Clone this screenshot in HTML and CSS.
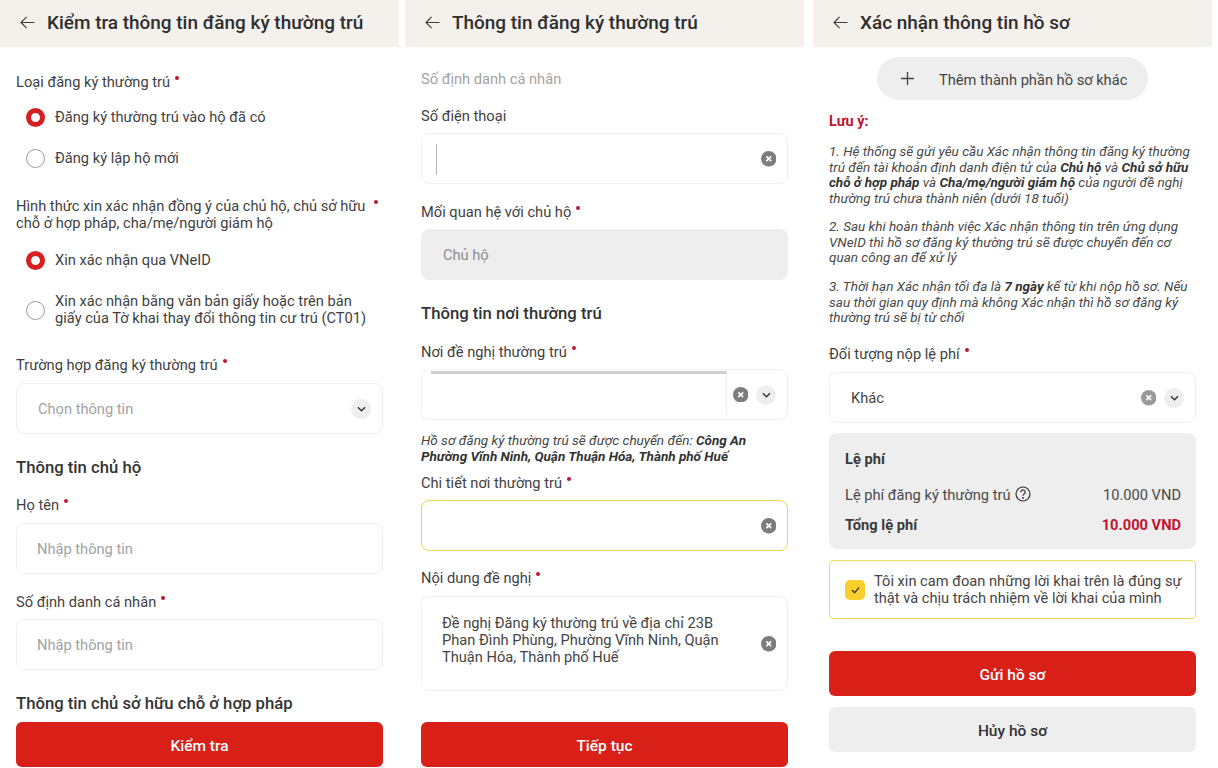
FILE: index.html
```html
<!DOCTYPE html>
<html lang="vi">
<head>
<meta charset="utf-8">
<title>Đăng ký thường trú</title>
<link rel="stylesheet" href="styles.css">
</head>
<body>
<main class="screens">
  <section class="panel panel-check">
    <header class="bar">
      <svg class="back" viewBox="0 0 16 14"><path d="M15.5 7H1M7 1 1 7l6 6"/></svg>
      <h1>Kiểm tra thông tin đăng ký thường trú</h1>
    </header>
    <div class="content">
      <p class="label l1a">Loại đăng ký thường trú<i class="dot"></i></p>
      <div class="radio r1a"><span class="mark on"></span><span>Đăng ký thường trú vào hộ đã có</span></div>
      <div class="radio r1b"><span class="mark"></span><span>Đăng ký lập hộ mới</span></div>
      <p class="label l1b">Hình thức xin xác nhận đồng ý của chủ hộ, chủ sở hữu<i class="dot wide"></i><br>chỗ ở hợp pháp, cha/mẹ/người giám hộ</p>
      <div class="radio r1c"><span class="mark on"></span><span>Xin xác nhận qua VNeID</span></div>
      <div class="radio r1d"><span class="mark"></span><span>Xin xác nhận bằng văn bản giấy hoặc trên bản<br>giấy của Tờ khai thay đổi thông tin cư trú (CT01)</span></div>
      <p class="label l1c">Trường hợp đăng ký thường trú<i class="dot"></i></p>
      <div class="field f1c"><span class="ph">Chọn thông tin</span>
        <span class="chev"><svg viewBox="0 0 10 6"><path d="M1 1l4 4 4-4"/></svg></span></div>
      <h2 class="sec s1a">Thông tin chủ hộ</h2>
      <p class="label l1d">Họ tên<i class="dot"></i></p>
      <div class="field tight f1d"><span class="ph">Nhập thông tin</span></div>
      <p class="label l1e">Số định danh cá nhân<i class="dot"></i></p>
      <div class="field tight f1e"><span class="ph">Nhập thông tin</span></div>
      <h2 class="sec s1b">Thông tin chủ sở hữu chỗ ở hợp pháp</h2>
      <button class="btn primary b1">Kiểm tra</button>
    </div>
  </section>

  <section class="panel panel-info">
    <header class="bar">
      <svg class="back" viewBox="0 0 16 14"><path d="M15.5 7H1M7 1 1 7l6 6"/></svg>
      <h1>Thông tin đăng ký thường trú</h1>
    </header>
    <div class="content">
      <p class="label muted l2a">Số định danh cá nhân</p>
      <p class="label l2b">Số điện thoại</p>
      <div class="field f2b"><span class="caret"></span>
        <span class="clear"><svg viewBox="0 0 16 16"><circle cx="8" cy="8" r="8"/><path d="M5.5 5.5l5 5m0-5l-5 5"/></svg></span></div>
      <p class="label l2c">Mối quan hệ với chủ hộ<i class="dot"></i></p>
      <div class="field disabled f2c"><span class="ph dark">Chủ hộ</span></div>
      <h2 class="sec s2a">Thông tin nơi thường trú</h2>
      <p class="label l2d">Nơi đề nghị thường trú<i class="dot"></i></p>
      <div class="field area f2d"><span class="loading"></span>
        <span class="clear"><svg viewBox="0 0 16 16"><circle cx="8" cy="8" r="8"/><path d="M5.5 5.5l5 5m0-5l-5 5"/></svg></span>
        <span class="chev near"><svg viewBox="0 0 10 6"><path d="M1 1l4 4 4-4"/></svg></span></div>
      <p class="note">Hồ sơ đăng ký thường trú sẽ được chuyển đến: <b>Công An<br>Phường Vĩnh Ninh, Quận Thuận Hóa, Thành phố Huế</b></p>
      <p class="label l2e">Chi tiết nơi thường trú<i class="dot"></i></p>
      <div class="field focus f2e">
        <span class="clear"><svg viewBox="0 0 16 16"><circle cx="8" cy="8" r="8"/><path d="M5.5 5.5l5 5m0-5l-5 5"/></svg></span></div>
      <p class="label l2f">Nội dung đề nghị<i class="dot"></i></p>
      <div class="field tall f2f"><span class="val">Đề nghị Đăng ký thường trú về địa chỉ 23B<br>Phan Đình Phùng, Phường Vĩnh Ninh, Quận<br>Thuận Hóa, Thành phố Huế</span>
        <span class="clear"><svg viewBox="0 0 16 16"><circle cx="8" cy="8" r="8"/><path d="M5.5 5.5l5 5m0-5l-5 5"/></svg></span></div>
      <button class="btn primary b2">Tiếp tục</button>
    </div>
  </section>

  <section class="panel panel-confirm">
    <header class="bar">
      <svg class="back" viewBox="0 0 16 14"><path d="M15.5 7H1M7 1 1 7l6 6"/></svg>
      <h1>Xác nhận thông tin hồ sơ</h1>
    </header>
    <div class="content">
      <div class="pill">
        <svg viewBox="0 0 12 12"><path d="M6 0v12M0 6h12"/></svg>
        <span>Thêm thành phần hồ sơ khác</span>
      </div>
      <p class="warn">Lưu ý:</p>
      <p class="para p1">1. Hệ thống sẽ gửi yêu cầu Xác nhận thông tin đăng ký thường<br>trú đến tài khoản định danh điện tử của <b>Chủ hộ</b> và <b>Chủ sở hữu</b><br><b>chỗ ở hợp pháp</b> và <b>Cha/mẹ/người giám hộ</b> của người đề nghị<br>thường trú chưa thành niên (dưới 18 tuổi)</p>
      <p class="para p2">2. Sau khi hoàn thành việc Xác nhận thông tin trên ứng dụng<br>VNeID thì hồ sơ đăng ký thường trú sẽ được chuyển đến cơ<br>quan công an để xử lý</p>
      <p class="para p3">3. Thời hạn Xác nhận tối đa là <b>7 ngày</b> kể từ khi nộp hồ sơ. Nếu<br>sau thời gian quy định mà không Xác nhận thì hồ sơ đăng ký<br>thường trú sẽ bị từ chối</p>
      <p class="label l3a">Đối tượng nộp lệ phí<i class="dot"></i></p>
      <div class="field f3a"><span class="val grow">Khác</span>
        <span class="clear light"><svg viewBox="0 0 16 16"><circle cx="8" cy="8" r="8"/><path d="M5.5 5.5l5 5m0-5l-5 5"/></svg></span>
        <span class="chev near"><svg viewBox="0 0 10 6"><path d="M1 1l4 4 4-4"/></svg></span></div>
      <div class="fee">
        <h3>Lệ phí</h3>
        <div class="fee-row"><span class="fee-name">Lệ phí đăng ký thường trú
          <svg class="help" viewBox="0 0 16 16"><circle cx="8" cy="8" r="7"/><path d="M5.8 6.2a2.2 2.2 0 1 1 3.4 1.8c-.8.5-1.2 1-1.2 1.8"/><circle class="pt" cx="8" cy="12" r=".9"/></svg></span><span>10.000 VND</span></div>
        <div class="fee-row total"><span>Tổng lệ phí</span><span class="red">10.000 VND</span></div>
      </div>
      <div class="oath">
        <span class="tick"><svg viewBox="0 0 10 8"><path d="M1 4l3 3 5-6"/></svg></span>
        <span>Tôi xin cam đoan những lời khai trên là đúng sự<br>thật và chịu trách nhiệm về lời khai của mình</span>
      </div>
      <button class="btn primary b3">Gửi hồ sơ</button>
      <button class="btn ghost b4">Hủy hồ sơ</button>
    </div>
  </section>
</main>
</body>
</html>
```
FILE: styles.css
```css
* { box-sizing: border-box; }
html, body { margin: 0; height: 768px; overflow: hidden; background: #fff; }
body { font-family: Roboto, "Liberation Sans", sans-serif; color: #3a3a3a; font-size: 14.65px; }
p, h1, h2, h3 { margin: 0; }

.screens { display: flex; width: 1218px; height: 768px; }
.panel { width: 399px; height: 768px; flex: none; }
.panel-info { margin-left: 6px; }
.panel-confirm { margin-left: 9px; }

.bar { height: 47px; background: #f4f0ec; display: flex; align-items: center; padding: 0 0 3px 20px; }
.bar h1 { font-size: 18.95px; font-weight: 500; color: #2e2e2e; margin-left: 12px; white-space: nowrap; }
.back { width: 15px; height: 13px; fill: none; stroke: #3c3c3c; stroke-width: 1.2; flex: none; }

.content { padding: 0 16px; display: flex; flex-direction: column; }

.label { line-height: 17px; color: #3f3f3f; white-space: nowrap; }
.label.muted { color: #a3a3a3; }
.dot { display: inline-block; width: 4px; height: 4px; border-radius: 50%; background: #c2152f; margin-left: 5px; vertical-align: 7px; }
.dot.wide { margin-left: 9px; }

.radio { display: flex; align-items: center; line-height: 17px; color: #3f3f3f; white-space: nowrap; }
.mark { width: 19px; height: 19px; border-radius: 50%; border: 1px solid #9a9a9a; margin: 0 10px; flex: none; background: #fff; }
.mark.on { border: 5.5px solid #d71f1f; }

.sec { font-size: 16.7px; font-weight: 500; line-height: 18px; color: #333; white-space: nowrap; }

.field { height: 51px; border: 1px solid #f0f0f0; border-radius: 8px; display: flex; align-items: center; padding: 1px 11px 0 21px; background: #fff; flex: none; }
.field.tight { padding-left: 20px; }
.field.disabled { background: #eee; border-color: #eee; }
.field.focus { border: 1.5px solid #ead74f; }
.field.tall { height: 95px; padding-left: 20px; }
.field.area { padding: 0 11px 0 9px; }
.ph { color: #a2a2a2; }
.ph.dark { color: #8d8d8d; }
.val { line-height: 17px; color: #444; flex: 1; white-space: nowrap; }
.tall .val { padding-bottom: 7px; }
.grow { flex: 1; }
.caret { width: 1px; height: 31px; background: #b5b5b5; margin-left: -7px; }
.loading { flex: 1; align-self: flex-start; height: 44px; margin-top: 1px; border-top: 3px solid #cfcfcf; border-right: 1px solid #eeeeee; }

.chev { width: 20px; height: 20px; border-radius: 50%; background: #eeeeee; margin-left: auto; display: flex; align-items: center; justify-content: center; flex: none; }
.chev svg { width: 9px; height: 6px; fill: none; stroke: #333; stroke-width: 1.5; }
.chev.near { margin-left: 8px; }
.clear { width: 15.5px; height: 15.5px; margin-left: auto; flex: none; display: flex; }
.clear svg { width: 15.5px; height: 15.5px; }
.clear circle { fill: #7d7d7d; }
.clear.light circle { fill: #9a9a9a; }
.clear path { stroke: #fff; stroke-width: 1.6; fill: none; }
.field.area .clear { margin-left: 6px; }

.note { font-size: 13.5px; font-style: italic; line-height: 15.5px; color: #444; margin-top: 13px; white-space: nowrap; }
.note b { font-weight: 700; color: #333; }

.btn { height: 45px; border: 0; border-radius: 6px; padding: 2px 0 0; font: 500 15.5px Roboto, "Liberation Sans", sans-serif; flex: none; display: block; width: 100%; }
.btn.primary { background: #d81f18; color: #fff; }
.btn.ghost { background: #eeeeee; color: #333; }

/* screen 1 rhythm */
.l1a { margin-top: 27px; }
.r1a { margin-top: 16px; height: 20px; }
.r1b { margin-top: 21px; height: 20px; }
.l1b { margin-top: 30px; }
.r1c { margin-top: 18px; height: 20px; }
.r1d { margin-top: 23px; height: 34px; }
.l1c { margin-top: 30px; }
.f1c { margin-top: 9px; }
.s1a { margin-top: 25px; }
.l1d { margin-top: 20px; }
.f1d { margin-top: 9px; }
.l1e { margin-top: 20px; }
.f1e { margin-top: 8px; }
.s1b { margin-top: 25px; }
.b1 { margin-top: 9px; }

/* screen 2 rhythm */
.l2a { margin-top: 24px; }
.l2b { margin-top: 20px; }
.f2b { margin-top: 8px; }
.l2c { margin-top: 20px; }
.f2c { margin-top: 8px; }
.s2a { margin-top: 25px; }
.l2d { margin-top: 21px; }
.f2d { margin-top: 8px; }
.l2e { margin-top: 11px; }
.f2e { margin-top: 8px; }
.l2f { margin-top: 19px; }
.f2f { margin-top: 9px; }
.b2 { margin-top: 31px; }

/* screen 3 */
.pill { width: 271px; height: 43px; margin: 10px 0 0 48px; border-radius: 22px; background: #eeeeee; display: flex; align-items: center; padding: 2px 0 0 24px; color: #444; flex: none; white-space: nowrap; }
.pill svg { width: 13px; height: 13px; fill: none; stroke: #444; stroke-width: 1.2; margin: -2px 25px 0 0; flex: none; }
.warn { font-size: 14.5px; font-weight: 700; line-height: 16px; color: #c2152f; margin-top: 14px; }
.para { font-size: 13.5px; font-style: italic; line-height: 15.7px; color: #484848; white-space: nowrap; }
.para b { font-weight: 700; color: #333; }
.p1 { margin-top: 14px; }
.p2 { margin-top: 12px; }
.p3 { margin-top: 13px; }
.l3a { margin-top: 20px; }
.f3a { margin-top: 9px; }
.fee { height: 116px; margin-top: 10px; background: #eeeeee; border-radius: 8px; padding: 18px 15px 0 16px; flex: none; }
.fee h3 { font-size: 14.65px; font-weight: 700; line-height: 17px; color: #3a3a3a; }
.fee-row { display: flex; justify-content: space-between; line-height: 17px; margin-top: 19px; color: #4a4a4a; }
.fee-row.total { margin-top: 13px; font-weight: 700; color: #3a3a3a; }
.fee-name { display: flex; align-items: flex-start; }
.help { width: 16px; height: 16px; margin: -1px 0 0 4px; fill: none; stroke: #333; stroke-width: 1.2; }
.help .pt { fill: #333; stroke: none; }
.red { color: #c2152f; }
.oath { height: 59px; margin-top: 11px; border: 1.5px solid #eedb5c; border-radius: 4px; display: flex; align-items: center; padding-left: 15px; line-height: 17px; flex: none; white-space: nowrap; color: #444; }
.tick { width: 20px; height: 20px; border-radius: 5px; background: #fbcf2b; margin-right: 9px; flex: none; display: flex; align-items: center; justify-content: center; }
.tick svg { width: 9px; height: 8px; fill: none; stroke: #333; stroke-width: 1.4; }
.b3 { margin-top: 32px; }
.b4 { margin-top: 11px; }
```
